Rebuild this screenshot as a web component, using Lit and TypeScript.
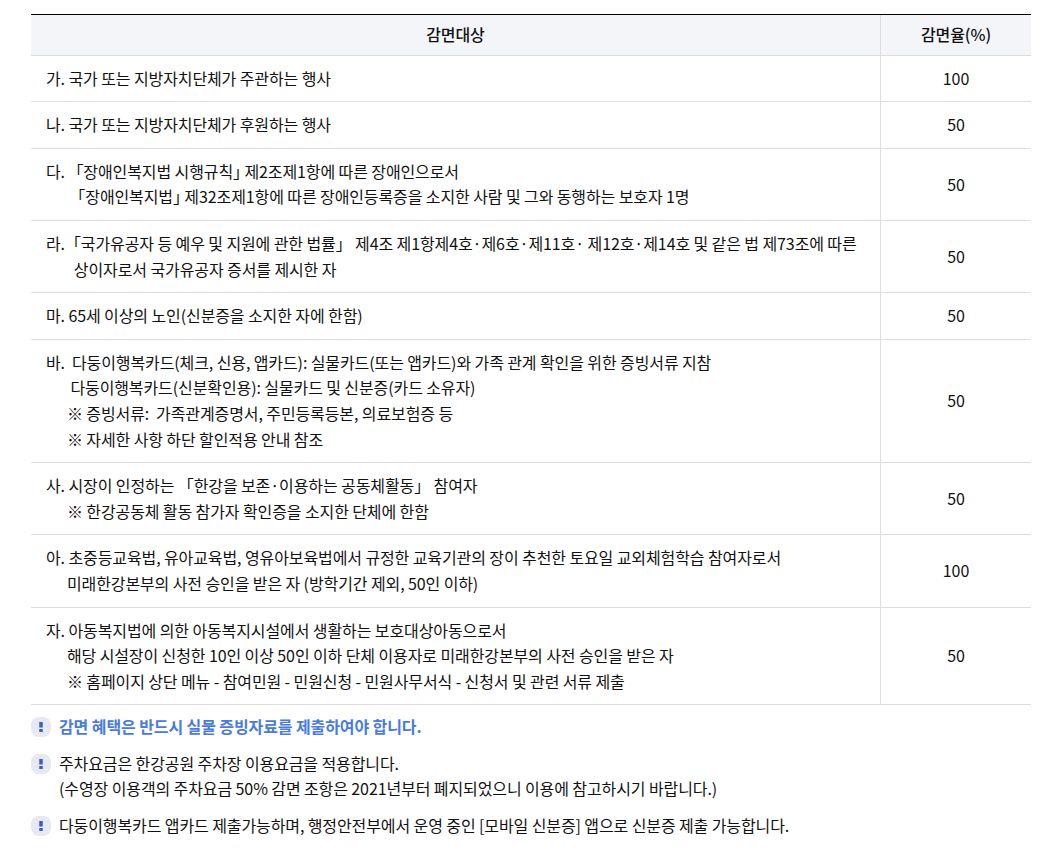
import { LitElement, html, css } from "lit";
import { customElement } from "lit/decorators.js";

const sp = (n: number) => "\u00a0".repeat(n);

const rows: [string[], string][] = [
  [["가. 국가 또는 지방자치단체가 주관하는 행사"], "100"],
  [["나. 국가 또는 지방자치단체가 후원하는 행사"], "50"],
  [["다." + sp(3) + "｢장애인복지법 시행규칙｣ 제2조제1항에 따른 장애인으로서", sp(9) + "｢장애인복지법｣ 제32조제1항에 따른 장애인등록증을 소지한 사람 및 그와 동행하는 보호자 1명"], "50"],
  [["라.「국가유공자 등 예우 및 지원에 관한 법률」 제4조 제1항제4호·제6호·제11호· 제12호·제14호 및 같은 법 제73조에 따른", sp(8) + "상이자로서 국가유공자 증서를 제시한 자"], "50"],
  [["마. 65세 이상의 노인(신분증을 소지한 자에 한함)"], "50"],
  [["바." + sp(2) + "다둥이행복카드(체크, 신용, 앱카드): 실물카드(또는 앱카드)와 가족 관계 확인을 위한 증빙서류 지참", sp(7) + "다둥이행복카드(신분확인용): 실물카드 및 신분증(카드 소유자)", sp(6) + "※ 증빙서류:" + sp(2) + "가족관계증명서, 주민등록등본, 의료보험증 등", sp(6) + "※ 자세한 사항 하단 할인적용 안내 참조"], "50"],
  [["사. 시장이 인정하는 「한강을 보존·이용하는 공동체활동」 참여자", sp(6) + "※ 한강공동체 활동 참가자 확인증을 소지한 단체에 한함"], "50"],
  [["아. 초중등교육법, 유아교육법, 영유아보육법에서 규정한 교육기관의 장이 추천한 토요일 교외체험학습 참여자로서", sp(6) + "미래한강본부의 사전 승인을 받은 자 (방학기간 제외, 50인 이하)"], "100"],
  [["자. 아동복지법에 의한 아동복지시설에서 생활하는 보호대상아동으로서", sp(6) + "해당 시설장이 신청한 10인 이상 50인 이하 단체 이용자로 미래한강본부의 사전 승인을 받은 자", sp(6) + "※ 홈페이지 상단 메뉴 - 참여민원 - 민원신청 - 민원사무서식 - 신청서 및 관련 서류 제출"], "50"],
];

const notes: { lines: string[]; hi?: boolean }[] = [
  { lines: ["감면 혜택은 반드시 실물 증빙자료를 제출하여야 합니다."], hi: true },
  { lines: ["주차요금은 한강공원 주차장 이용요금을 적용합니다.", "(수영장 이용객의 주차요금 50% 감면 조항은 2021년부터 폐지되었으니 이용에 참고하시기 바랍니다.)"] },
  { lines: ["다둥이행복카드 앱카드 제출가능하며, 행정안전부에서 운영 중인 [모바일 신분증] 앱으로 신분증 제출 가능합니다."] },
];

@customElement("app-root")
export class AppRoot extends LitElement {
  static styles = css`
    :host {
      display: block;
      padding: 14px 29px 0 31px;
      background: #fff;
      font-family: "Noto Sans CJK KR", "Noto Sans", sans-serif;
      font-size: 16px;
      line-height: 25.6px;
      letter-spacing: -0.1px;
      color: #111;
    }
    table {
      width: 1000px;
      border-collapse: separate;
      border-spacing: 0;
      table-layout: fixed;
      border-top: 1px solid #000;
    }
    th, td {
      border-bottom: 1px solid #ddd;
      font-weight: 400;
    }
    th {
      background: #f4f5f9;
      height: 39.6px;
      padding: 0;
      font-weight: 500;
      text-align: center;
    }
    td { padding: 10px 15px; }
    td.rate, th.rate {
      width: 150px;
      border-left: 1px solid #ddd;
      text-align: center;
      padding-left: 0;
      padding-right: 0;
    }
    .line { display: block; white-space: nowrap; }
    .notes {
      list-style: none;
      margin: 9px 0 0;
      padding: 0;
      width: 1000px;
      display: flex;
      flex-direction: column;
      gap: 11px;
    }
    .notes li { display: flex; gap: 8px; }
    .mark {
      flex: none;
      width: 20px;
      height: 20px;
      margin-top: 3px;
      border-radius: 8px;
      background: #e6e9f3;
      display: flex;
      align-items: center;
      justify-content: center;
    }
    .hi { color: #4a7bdc; font-weight: 700; }
  `;

  render() {
    return html`
      <table>
        <thead><tr><th>감면대상</th><th class="rate">감면율(%)</th></tr></thead>
        <tbody>
          ${rows.map(([lines, rate]) => html`<tr>
            <td>${lines.map((l) => html`<span class="line">${l}</span>`)}</td>
            <td class="rate">${rate}</td>
          </tr>`)}
        </tbody>
      </table>
      <ul class="notes">
        ${notes.map((n) => html`<li>
          <span class="mark"><svg width="4" height="12" viewBox="0 0 4 12"><rect x="0.25" y="1" width="3.5" height="5.5" fill="#3f5fc0"/><rect x="0.25" y="8" width="3.5" height="3" fill="#3f5fc0"/></svg></span>
          <div class=${n.hi ? "hi" : ""}>${n.lines.map((l) => html`<span class="line">${l}</span>`)}</div>
        </li>`)}
      </ul>
    `;
  }
}
